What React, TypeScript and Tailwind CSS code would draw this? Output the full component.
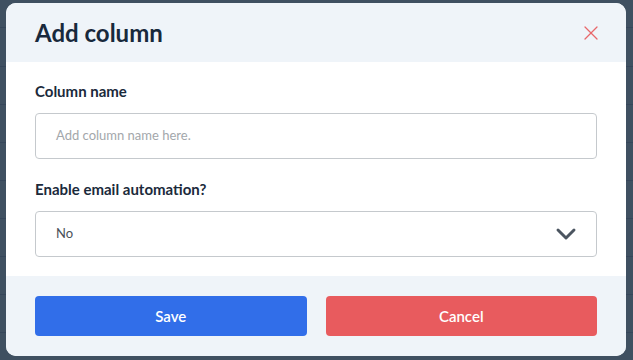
import {X, ChevronDown} from 'lucide-react';

const rows = ['h-[28px]', 'h-[39px]', 'h-[38px]', 'h-[38px]', 'h-[38px]', 'h-[38px]', 'h-[38px]', 'h-[38px]', 'h-[38px]'];

export default function App() {
  return (
    <div className="relative w-[633px] h-[360px] overflow-hidden bg-[#3f5061] font-['Lato','Noto_Sans',sans-serif]">
      {/* dimmed table behind the overlay */}
      <div className="flex flex-col">
        {rows.map((h, i) => (
          <div key={i} className={`${h} border-b border-[#36465a]`} />
        ))}
      </div>

      <div className="absolute left-[6px] top-[3px] w-[620px] h-[353px] rounded-[10px] overflow-hidden bg-white flex flex-col">
        <div className="h-[59px] bg-[#eff4f9] flex items-center justify-between px-[29px]">
          <h2 className="text-[24px] leading-[32px] font-bold text-[#18293c]">Add column</h2>
          <X size={24} strokeWidth={1.3} className="text-[#e8676b] -mr-[6px]" />
        </div>

        <div className="flex flex-col px-[29px] pt-[19px] pb-[19px]">
          <label className="text-[15px] leading-[20px] font-bold text-[#1b2a3b] mb-[12px]">Column name</label>
          <div className="h-[46px] border border-[#c5c9cd] rounded-[4px] flex items-center px-[20px]">
            <span className="text-[13px] text-[#a3a7ab]">Add column name here.</span>
          </div>

          <label className="text-[15px] leading-[20px] font-bold text-[#1b2a3b] mt-[20px] mb-[12px]">Enable email automation?</label>
          <div className="h-[46px] border border-[#c5c9cd] rounded-[4px] flex items-center justify-between pl-[20px] pr-[14px]">
            <span className="text-[13px] text-[#4a5159]">No</span>
            <ChevronDown size={32} strokeWidth={2.2} className="text-[#4b5560]" />
          </div>
        </div>

        <div className="flex-1 bg-[#eff4f9] px-[29px] pt-[20px] flex gap-[19px]">
          <button className="flex-1 h-[40px] rounded-[4px] bg-[#316ee9] text-white text-[15px] font-semibold">Save</button>
          <button className="flex-1 h-[40px] rounded-[4px] bg-[#e85b5e] text-white text-[15px] font-semibold">Cancel</button>
        </div>
      </div>
    </div>
  );
}
